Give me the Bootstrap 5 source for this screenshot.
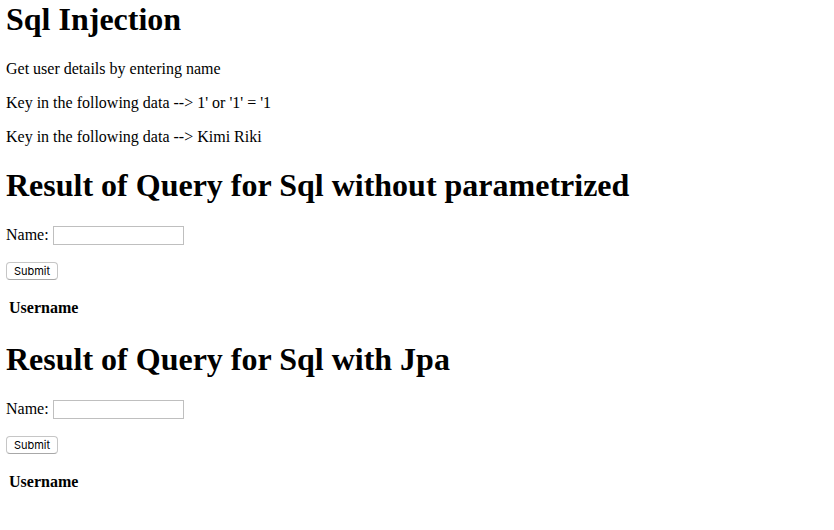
<!DOCTYPE html>
<html lang="en">
<head>
<meta charset="utf-8">
<meta name="viewport" content="width=device-width, initial-scale=1">
<title>Sql Injection</title>
<link href="https://cdn.jsdelivr.net/npm/bootstrap@5.3.0/dist/css/bootstrap.min.css" rel="stylesheet">
<style>
body { font-family: "Liberation Serif", "Times New Roman", serif; font-size: 16px; line-height: 18px; color: #000; background: #fff; }
.page { padding: 1px 6px; }
h1 { font-size: 32px; line-height: 37px; font-weight: 700; margin: 0 0 22px; }
p { margin: 0 0 16px; }
.query { margin-top: 21px; }
.field-row { margin-bottom: 17px; }
.action-row { margin-bottom: 16px; }
.name-input { width: 131px; height: 19px; padding: 1px 3px; border: 1px solid #bfbfbf; border-radius: 0; font: 11px/15px Inter, "Liberation Sans", sans-serif; }
.submit-btn { min-width: 52px; height: 18px; padding: 0 6px; border: 1px solid #c6c6c6; border-bottom-color: #a8a8a8; border-radius: 4px; background: #fff; color: #000; font: 11px/16px Inter, "Liberation Sans", sans-serif; }
.result-table { border-collapse: separate; border-spacing: 2px; }
.result-table th { padding: 1px; }
</style>
</head>
<body>
<main class="container-fluid page">
  <h1>Sql Injection</h1>
  <p>Get user details by entering name</p>
  <p>Key in the following data --&gt; 1' or '1' = '1</p>
  <p>Key in the following data --&gt; Kimi Riki</p>
  <section class="query">
    <h1>Result of Query for Sql without parametrized</h1>
    <form>
      <div class="field-row d-flex align-items-start gap-1"><label for="name-plain">Name:</label><input class="name-input" type="text" id="name-plain"></div>
      <div class="action-row d-flex"><button class="submit-btn" type="submit">Submit</button></div>
    </form>
    <table class="result-table"><thead><tr><th scope="col">Username</th></tr></thead></table>
  </section>
  <section class="query">
    <h1>Result of Query for Sql with Jpa</h1>
    <form>
      <div class="field-row d-flex align-items-start gap-1"><label for="name-jpa">Name:</label><input class="name-input" type="text" id="name-jpa"></div>
      <div class="action-row d-flex"><button class="submit-btn" type="submit">Submit</button></div>
    </form>
    <table class="result-table"><thead><tr><th scope="col">Username</th></tr></thead></table>
  </section>
</main>
<script src="https://cdn.jsdelivr.net/npm/bootstrap@5.3.0/dist/js/bootstrap.bundle.min.js"></script>
</body>
</html>
